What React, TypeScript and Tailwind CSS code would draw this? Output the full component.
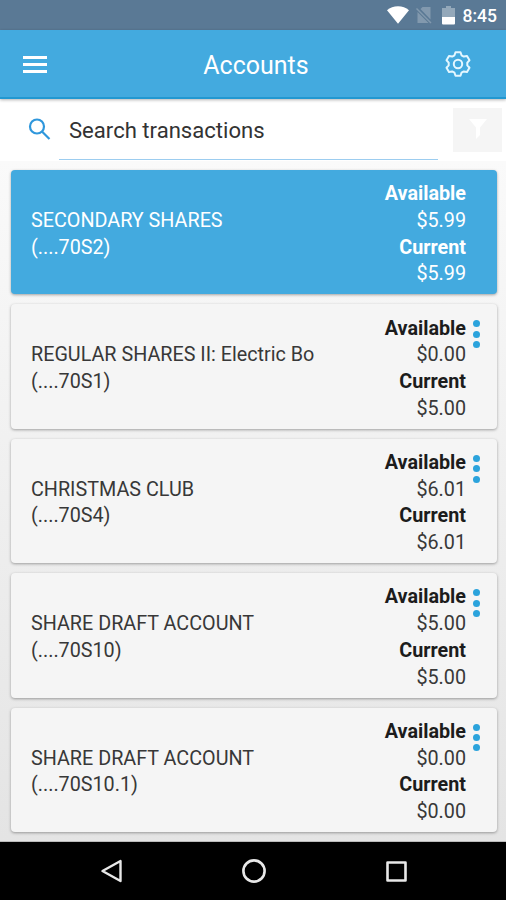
type Account = {
  name: string;
  number: string;
  available: string;
  current: string;
  selected?: boolean;
};

const ACCOUNTS: Account[] = [
  { name: 'SECONDARY SHARES', number: '(....70S2)', available: '$5.99', current: '$5.99', selected: true },
  { name: 'REGULAR SHARES II: Electric Bo', number: '(....70S1)', available: '$0.00', current: '$5.00' },
  { name: 'CHRISTMAS CLUB', number: '(....70S4)', available: '$6.01', current: '$6.01' },
  { name: 'SHARE DRAFT ACCOUNT', number: '(....70S10)', available: '$5.00', current: '$5.00' },
  { name: 'SHARE DRAFT ACCOUNT', number: '(....70S10.1)', available: '$0.00', current: '$0.00' },
];

function StatusBar() {
  return (
    <div className="h-[30px] shrink-0 bg-[#5a7995] flex items-center justify-end pr-[9px] text-white">
      <svg className="w-[22px] h-[18px] mr-[7px]" viewBox="0 0 22 18" fill="currentColor">
        <path d="M11 17.8 0 4.2C3 1.7 6.8 .3 11 .3s8 1.4 11 3.9z" />
      </svg>
      <svg className="w-[16px] h-[18px] mr-[10px]" viewBox="0 0 16 18">
        <path d="M6.500 1H14.500v12.500L4.500 3z" fill="#8299ae" />
        <path d="M1.500 6v11h11z" fill="#8299ae" />
        <path d="M.5 2.500 15 17" stroke="#8299ae" strokeWidth="1.500" />
      </svg>
      <svg className="w-[13px] h-[19px] mr-[8px]" viewBox="0 0 13 19">
        <path d="M4 0h5v2h4v9H0V2h4z" fill="#93a8ba" />
        <path d="M0 11h13v6.500q0 1-1 1H1q-1 0-1-1z" fill="#fff" />
      </svg>
      <span className="text-[17.500px] font-medium leading-[30px] pt-[2px]">8:45</span>
    </div>
  );
}

function Gear() {
  return (
    <svg className="w-[28px] h-[28px]" viewBox="-14 -14 28 28" fill="none" stroke="#e4f7ff" strokeWidth="2" strokeLinejoin="round">
      <path d="M-3.500-8.700-2.500-11.800H2.500L3.500-8.700 5.800-7.400 9-8.100 11.500-3.800 9.300-1.400V1.400L11.500 3.800 9 8.100 5.800 7.400 3.500 8.700 2.500 11.800H-2.500L-3.500 8.700-5.800 7.400-9 8.100-11.500 3.800-9.300 1.400V-1.400L-11.500-3.800-9-8.100-5.800-7.400z" />
      <circle r="4.200" />
    </svg>
  );
}

function Header() {
  return (
    <header className="relative z-10 h-[69px] shrink-0 bg-[#43aadf] border-b-2 border-[#2298d1] shadow-[0_1px_3px_rgba(0,0,0,0.3)] flex items-center justify-between pl-[23px] pr-[34px] text-white">
      <button className="w-[24px] flex flex-col gap-[4px] pt-[1px]">
        <span className="h-[3px] bg-white" />
        <span className="h-[3px] bg-white" />
        <span className="h-[3px] bg-white" />
      </button>
      <h1 className="text-[25px] leading-[30px] ml-[21px] pt-[4px]">Accounts</h1>
      <Gear />
    </header>
  );
}

function SearchBar() {
  return (
    <div className="h-[62px] shrink-0 bg-white flex pl-[28px] pr-[4px]">
      <svg className="w-[23px] h-[23px] mt-[19px]" viewBox="0 0 23 23" fill="none" stroke="#2f97dc" strokeWidth="2.200">
        <circle cx="9" cy="8.500" r="7" />
        <path d="M14 13.500 21.500 21" />
      </svg>
      <div className="w-[379px] ml-[8px]">
        <p className="h-[60px] pl-[10px] text-[22.100px] leading-[62px] text-[#333]">Search transactions</p>
        <div className="h-[1px] bg-[#9ccdf0]" />
      </div>
      <div className="ml-auto mt-[9px] w-[49px] h-[44px] bg-[#f5f5f5] flex items-center justify-center">
        <svg className="w-[18px] h-[20px] mt-[-3px]" viewBox="0 0 18 20" fill="#fff">
          <path d="M0 0h18l-7 8.500V16l-4 4V8.500z" />
        </svg>
      </div>
    </div>
  );
}

function AccountCard({ account }: { account: Account }) {
  return (
    <div
      className={`relative h-[124.400px] shrink-0 rounded-[4px] pl-[20px] pr-[31px] pt-[5px] flex items-center justify-between text-[19.750px] leading-[26.700px] shadow-[0_1px_3px_rgba(0,0,0,0.35)] ${
        account.selected ? 'bg-[#43aadf] text-white' : 'bg-[#f5f5f5] text-[#383838]'
      }`}
    >
      <div>
        <p>{account.name}</p>
        <p>{account.number}</p>
      </div>
      <div className={account.selected ? 'text-right' : 'text-right [&_b]:text-[#1c1c1c]'}>
        <p><b>Available</b></p>
        <p>{account.available}</p>
        <p><b>Current</b></p>
        <p>{account.current}</p>
      </div>
      {!account.selected && (
        <div className="absolute right-[17px] top-[16px] flex flex-col gap-[3.400px]">
          <span className="w-[7px] h-[7px] rounded-full bg-[#2ba3dc]" />
          <span className="w-[7px] h-[7px] rounded-full bg-[#2ba3dc]" />
          <span className="w-[7px] h-[7px] rounded-full bg-[#2ba3dc]" />
        </div>
      )}
    </div>
  );
}

function NavBar() {
  return (
    <nav className="h-[58px] shrink-0 bg-black flex items-center justify-between pl-[100px] pr-[99px]">
      <svg className="w-[22px] h-[24px]" viewBox="0 0 22 24" fill="none" stroke="#e8e8e8" strokeWidth="2.400" strokeLinejoin="round">
        <path d="M20.500 2v20L2.500 12z" />
      </svg>
      <svg className="w-[24px] h-[24px]" viewBox="0 0 24 24" fill="none" stroke="#e8e8e8" strokeWidth="2.600">
        <circle cx="12" cy="12" r="10.600" />
      </svg>
      <svg className="w-[21px] h-[21px]" viewBox="0 0 21 21" fill="none" stroke="#e8e8e8" strokeWidth="2.600" strokeLinejoin="round">
        <path d="M1.500 1.500h18v18h-18z" />
      </svg>
    </nav>
  );
}

export default function App() {
  return (
    <div className="w-[506px] h-[900px] flex flex-col overflow-hidden font-[Roboto,sans-serif]">
      <StatusBar />
      <Header />
      <SearchBar />
      <main className="h-[681px] shrink-0 bg-linear-to-b from-[#fafafa] to-[#e4e4e4] pr-[9px] pl-[11px] pt-[9px] flex flex-col gap-[10px] border-b border-[#bbb]">
        {ACCOUNTS.map((account, i) => (
          <AccountCard key={i} account={account} />
        ))}
      </main>
      <NavBar />
    </div>
  );
}
